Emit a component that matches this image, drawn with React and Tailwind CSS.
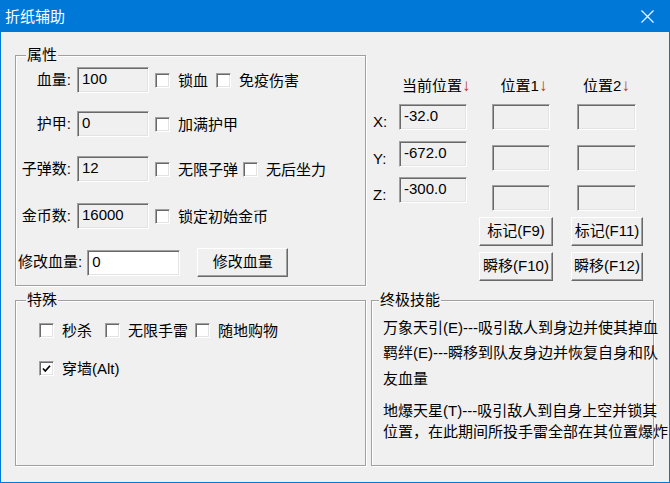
import React from 'react'

const sunken = 'border border-t-[#a0a0a0] border-l-[#a0a0a0] border-b-white border-r-white shadow-[inset_1px_1px_0_#696969,inset_-1px_-1px_0_#e3e3e3]'
const raised = 'border border-t-white border-l-white border-b-[#696969] border-r-[#696969] shadow-[inset_-1px_-1px_0_#a0a0a0] bg-[#f0f0f0]'
const etched = 'relative border border-[#a0a0a0] shadow-[inset_1px_1px_0_#fff,1px_1px_0_#fff]'

function Field({ value = '', className = '', white = false }) {
  return (
    <div className={`${sunken} ${white ? 'bg-white' : 'bg-[#f0f0f0]'} pl-[4px] pt-[2px] leading-[17px] shrink-0 ${className}`}>
      {value}
    </div>
  )
}

function Check({ label, checked = false, className = '' }) {
  return (
    <div className={`flex items-center shrink-0 ${className}`}>
      <span className={`${sunken} bg-white w-[15px] h-[15px] flex items-center justify-center`}>
        {checked && (
          <svg width="11" height="11" viewBox="0 0 11 11">
            <polyline points="2,5.5 4.3,8 9,2.8" fill="none" stroke="#000" strokeWidth="1.7" />
          </svg>
        )}
      </span>
      <span className="ml-[8px] leading-[17px] whitespace-nowrap">{label}</span>
    </div>
  )
}

function Group({ title, className = '', legendLeft = 'left-[10px]', children }) {
  return (
    <div className={`${etched} ${className}`}>
      <span className={`absolute -top-[10px] ${legendLeft} px-[1px] bg-[#f0f0f0] leading-[17px]`}>{title}</span>
      {children}
    </div>
  )
}

function Btn({ children, className = '' }) {
  return (
    <div className={`${raised} flex items-center justify-center whitespace-nowrap shrink-0 ${className}`}>{children}</div>
  )
}

const Arrow = () => <span className="text-[#b8361a] text-[17px] font-bold leading-[17px]">↓</span>

export default function App() {
  return (
    <div className="w-[670px] h-[483px] flex flex-col bg-[#0078d7] font-['Liberation_Sans','Noto_Sans_CJK_SC',sans-serif] text-[15px] text-black">
      {/* title bar */}
      <div className="h-[32px] shrink-0 flex items-center justify-between pl-[5px] pr-[16px] text-white">
        <span className="pt-[2px]">折纸辅助</span>
        <svg width="13" height="13" viewBox="0 0 13 13">
          <path d="M0.5 0.5 L12.5 12.5 M12.5 0.5 L0.5 12.5" stroke="#fff" strokeWidth="1.1" />
        </svg>
      </div>

      {/* body */}
      <div className="flex-1 mx-[1px] mb-[1px] bg-[#f0f0f0] pl-[14px] pt-[23px]">
        <div className="flex items-start">
          <Group title="属性" className="w-[351px] h-[231px] shrink-0">
            <div className="flex flex-col">
              <div className="flex items-center h-[26px] mt-[11px]">
                <span className="w-[55px] text-right">血量:</span>
                <Field value="100" className="ml-[6px] w-[72px] h-[26px]" />
                <Check label="锁血" className="ml-[6px]" />
                <Check label="免疫伤害" className="ml-[8px]" />
              </div>
              <div className="flex items-center h-[26px] mt-[18px]">
                <span className="w-[55px] text-right">护甲:</span>
                <Field value="0" className="ml-[6px] w-[72px] h-[26px]" />
                <Check label="加满护甲" className="ml-[6px]" />
              </div>
              <div className="flex items-center h-[26px] mt-[19px]">
                <span className="w-[55px] text-right">子弹数:</span>
                <Field value="12" className="ml-[6px] w-[72px] h-[26px]" />
                <Check label="无限子弹" className="ml-[6px]" />
                <Check label="无后坐力" className="ml-[5px]" />
              </div>
              <div className="flex items-center h-[26px] mt-[21px]">
                <span className="w-[55px] text-right">金币数:</span>
                <Field value="16000" className="ml-[6px] w-[72px] h-[26px]" />
                <Check label="锁定初始金币" className="ml-[6px]" />
              </div>
              <div className="flex items-center h-[29px] mt-[19px]">
                <span className="ml-[2px]">修改血量:</span>
                <Field value="0" white className="ml-[5px] w-[93px] h-[26px]" />
                <Btn className="ml-[17px] w-[91px] h-[29px]">修改血量</Btn>
              </div>
            </div>
          </Group>

          {/* position panel */}
          <div className="flex flex-col">
            <div className="flex">
              <div className="flex flex-col pl-[7px]">
                <div className="ml-[26px] w-[68px] mt-[22px] h-[17px] leading-[17px] text-center pl-[3px] whitespace-nowrap">当前位置<Arrow /></div>
                {[['X:', '-32.0', 'mt-[10px]'], ['Y:', '-672.0', 'mt-[11px]'], ['Z:', '-300.0', 'mt-[10px]']].map(([l, v, m]) => (
                  <div key={l} className={`flex items-start h-[26px] ${m}`}>
                    <span className="w-[26px] mt-[9px] leading-[17px]">{l}</span>
                    <Field value={v} className="w-[68px] h-[26px]" />
                  </div>
                ))}
              </div>
              {[['位置1', 'ml-[25px] w-[58px]', 'pl-[6px]'], ['位置2', 'ml-[27px] w-[59px]', 'pl-0']].map(([h, w, p]) => (
                <div key={h} className={`flex flex-col ${w}`}>
                  <div className={`mt-[22px] h-[17px] leading-[17px] text-center whitespace-nowrap ${p}`}>{h}<Arrow /></div>
                  <Field className="mt-[10px] w-full h-[26px]" />
                  <Field className="mt-[15px] w-full h-[26px]" />
                  <Field className="mt-[14px] w-full h-[26px]" />
                </div>
              ))}
            </div>
            <div className="ml-[113px] mt-[6px] grid grid-cols-[74px_72px] gap-x-[18px] gap-y-[6px]">
              <Btn className="h-[29px]">标记(F9)</Btn>
              <Btn className="h-[29px]">标记(F11)</Btn>
              <Btn className="h-[29px]">瞬移(F10)</Btn>
              <Btn className="h-[29px]">瞬移(F12)</Btn>
            </div>
          </div>
        </div>

        <div className="flex items-start mt-[14px]">
          <Group title="特殊" className="w-[351px] h-[166px] shrink-0">
            <div className="flex flex-col pt-[22px] pl-[23px]">
              <div className="flex items-center h-[15px]">
                <Check label="秒杀" />
                <Check label="无限手雷" className="ml-[13px]" />
                <Check label="随地购物" className="ml-[7px]" />
              </div>
              <div className="flex items-center h-[15px] mt-[23px]">
                <Check label="穿墙(Alt)" checked />
              </div>
            </div>
          </Group>

          <Group title="终极技能" legendLeft="left-[7px]" className="ml-[5px] w-[283px] h-[166px] shrink-0">
            <div className="flex flex-col pl-[11px] pt-[15px] whitespace-nowrap">
              <div className="leading-[24px]">万象天引(E)---吸引敌人到身边并使其掉血</div>
              <div className="leading-[26px]">
                <div>羁绊(E)---瞬移到队友身边并恢复自身和队</div>
                <div>友血量</div>
              </div>
              <div className="leading-[21px] mt-[8px]">
                <div>地爆天星(T)---吸引敌人到自身上空并锁其</div>
                <div>位置，在此期间所投手雷全部在其位置爆炸</div>
              </div>
            </div>
          </Group>
        </div>
      </div>
    </div>
  )
}
